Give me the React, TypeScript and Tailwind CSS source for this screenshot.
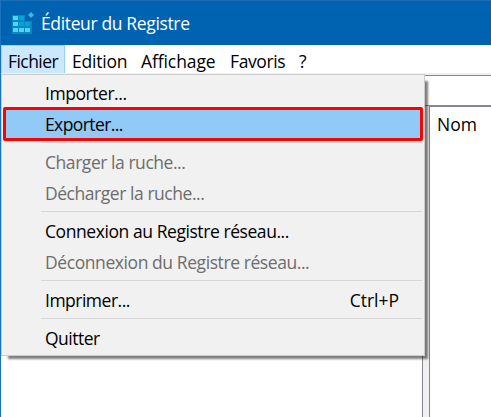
import { clsx } from "clsx";

type MenuEntry = {
    label: string;
    shortcut?: string;
    disabled?: boolean;
    active?: boolean;
    tracking: string;
};

const MENU_BAR = [
    { label: "Fichier", className: "w-16 tracking-[-0.55px]", open: true },
    { label: "Edition", className: "w-[69px] tracking-[-0.2px]" },
    { label: "Affichage", className: "w-[89px] tracking-[-0.1px]" },
    { label: "Favoris", className: "w-[69px] tracking-[-0.4px]" },
    { label: "?", className: "w-[23px]" },
];

const MENU_GROUPS: MenuEntry[][] = [
    [
        { label: "Importer...", tracking: "tracking-[-0.45px]" },
        { label: "Exporter...", active: true, tracking: "tracking-[-0.6px]" },
    ],
    [
        { label: "Charger la ruche...", disabled: true, tracking: "tracking-[-0.45px]" },
        { label: "Décharger la ruche...", disabled: true, tracking: "tracking-[-0.45px]" },
    ],
    [
        { label: "Connexion au Registre réseau...", tracking: "tracking-[-0.43px]" },
        { label: "Déconnexion du Registre réseau...", disabled: true, tracking: "tracking-[-0.42px]" },
    ],
    [{ label: "Imprimer...", shortcut: "Ctrl+P", tracking: "tracking-[-0.5px]" }],
    [{ label: "Quitter", tracking: "tracking-[-0.5px]" }],
];

function RegistryIcon() {
    return (
        <svg viewBox="0 0 23 22" className="h-[22px] w-[23px]">
            <path d="M0 3H13V9H20V22H0Z" fill="#0889bd" />
            <path d="M1 4h5v4H1zM1 10h5v4H1zM1 16h5v4H1zM7 16h5v4H7zM13 16h5v4h-5z" fill="#55d0fb" />
            <path d="M7 4h5v4H7zM7 10h5v4H7zM13 10h5v4h-5z" fill="#00a5dc" />
            <path d="M19 0L22 3L19 6L16 3Z" fill="#35b7e8" stroke="#1591cc" strokeWidth="0.7" />
        </svg>
    );
}

function FileMenu() {
    return (
        <div className="absolute left-0 top-[74px] h-[282px] w-[424px] border border-[#cccccc] bg-[#f1f1f1] pt-[3px] shadow-[5px_5px_2px_-2px_rgba(0,0,0,0.5)]">
            {MENU_GROUPS.map((group, i) => (
                <div key={i}>
                    {i > 0 && (
                        <div className="h-[7px] pl-[39px] pr-[2px] pt-[2px]">
                            <div className="h-px bg-[#d7d7d7]" />
                        </div>
                    )}
                    {group.map((item) => (
                        <div
                            key={item.label}
                            className={clsx(
                                "relative flex h-[31px] items-center justify-between pb-px pl-[43px] pr-[25px]",
                                item.disabled ? "text-[#6d6d6d]" : "text-black"
                            )}
                        >
                            {item.active && (
                                <span className="absolute -top-[2px] left-px h-[34px] w-[420px] rounded-[2px] border-[3px] border-[#ff0000] bg-[#91c9f7]" />
                            )}
                            <span className={clsx("relative", item.tracking)}>{item.label}</span>
                            {item.shortcut && <span>{item.shortcut}</span>}
                        </div>
                    ))}
                </div>
            ))}
        </div>
    );
}

export default function App() {
    return (
        <div className="relative flex h-[417px] w-[491px] flex-col overflow-hidden whitespace-nowrap border-l border-[#1a73bd] bg-white font-['Open_Sans','Noto_Sans',sans-serif] text-[17.5px] leading-[24px] text-black">
            {/* Title bar */}
            <header className="flex h-[45px] shrink-0 items-center gap-[6px] border-t border-[#1a6fb8] bg-[#0063b1] pl-[11px] text-white">
                <RegistryIcon />
                <h1 className="tracking-[-0.36px]">Éditeur du Registre</h1>
            </header>

            {/* Menu bar */}
            <nav className="flex h-7 shrink-0">
                {MENU_BAR.map((item) => (
                    <div
                        key={item.label}
                        className={clsx(
                            "flex h-[29px] items-center border pl-1.5 pt-[2px]",
                            item.className,
                            item.open ? "border-[#99d1ff] bg-[#cce8ff]" : "border-transparent"
                        )}
                    >
                        {item.label}
                    </div>
                ))}
            </nav>

            {/* Address bar */}
            <div className="h-[33px] shrink-0 border-b border-[#828790] bg-[#f0f0f0] pt-[2px]">
                <div className="h-[30px] border-t border-[#828790] bg-white" />
            </div>

            {/* Key tree and value list */}
            <main className="flex min-h-0 flex-1 bg-[#f0f0f0]">
                <div className="w-[422px] border-r border-[#828790] bg-white" />
                <div className="ml-[6px] flex-1 border-l border-t border-[#828790] bg-white pl-[7px] pt-[5px]">Nom</div>
            </main>

            <FileMenu />
        </div>
    );
}
